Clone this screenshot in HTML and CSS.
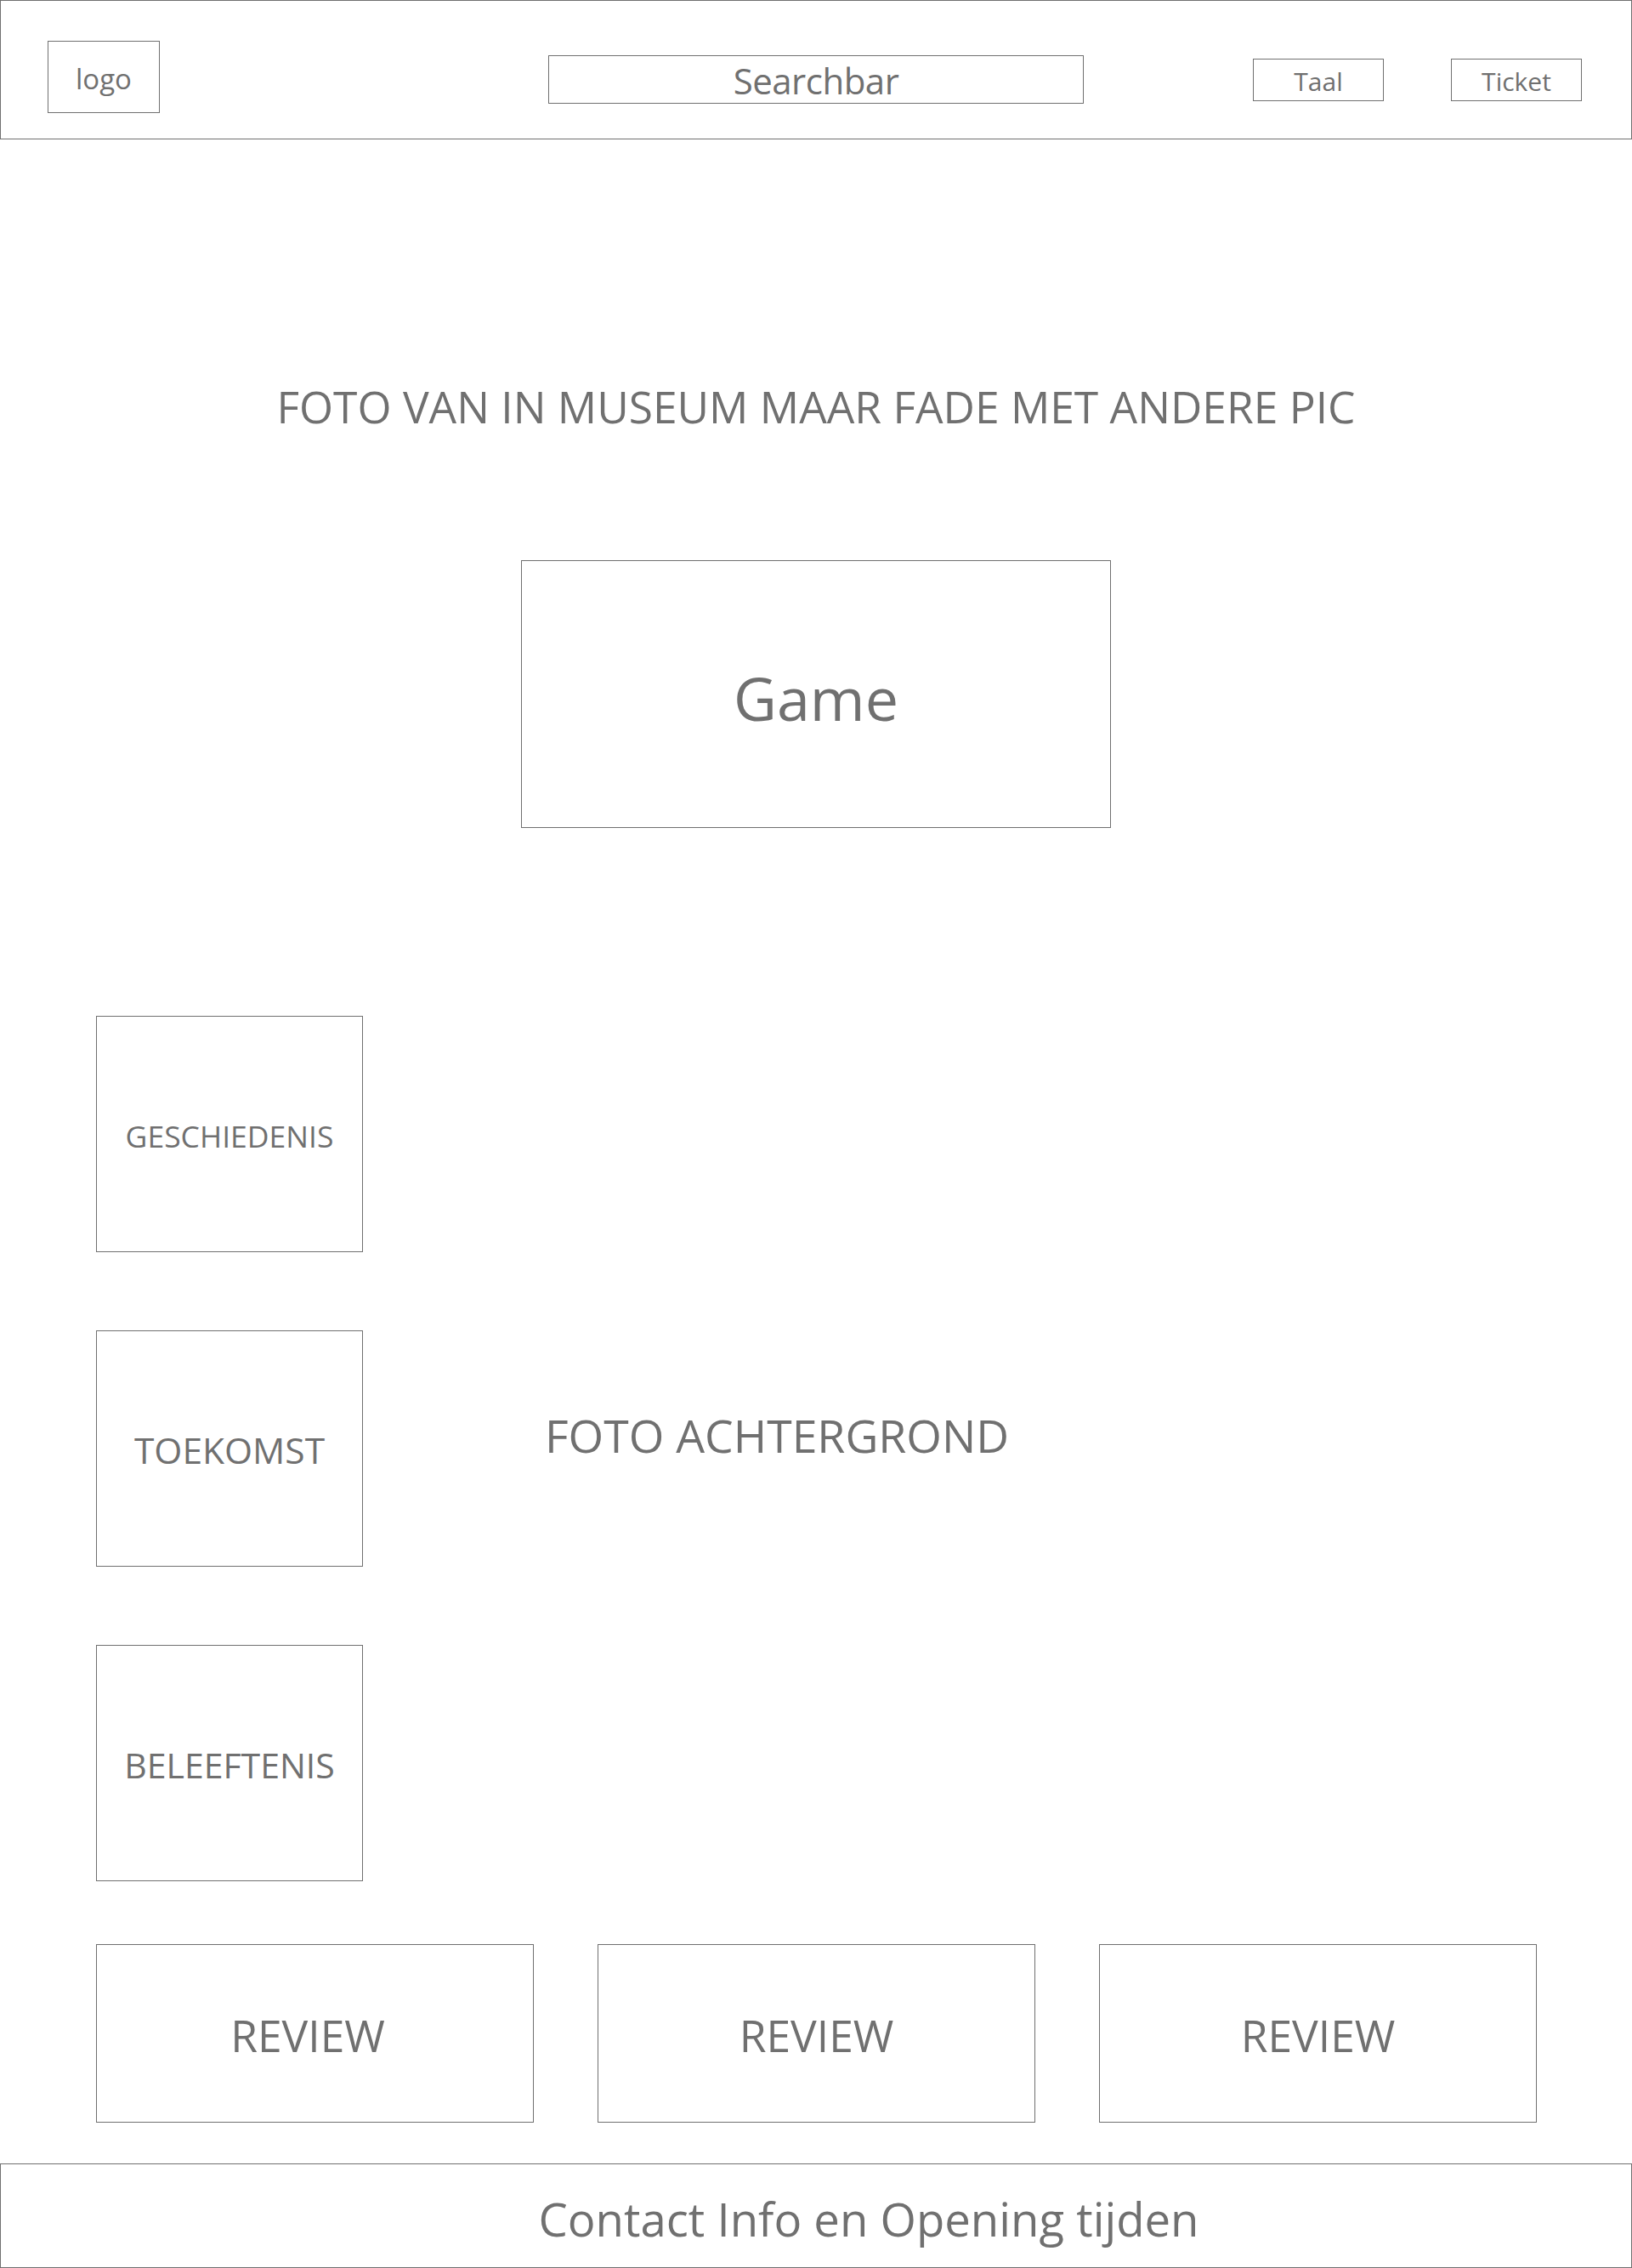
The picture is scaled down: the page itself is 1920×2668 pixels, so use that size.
FILE: index.html
```html
<!DOCTYPE html>
<html lang="nl">
<head>
<meta charset="utf-8">
<title>Museum wireframe</title>
<link rel="stylesheet" href="styles.css">
</head>
<body>
<header class="topbar">
  <div class="box logo">logo</div>
  <div class="box search">Searchbar</div>
  <div class="box pill pill-lang">Taal</div>
  <div class="box pill pill-ticket">Ticket</div>
</header>

<section class="hero">
  <h1 class="hero-title">FOTO VAN IN MUSEUM MAAR FADE MET ANDERE PIC</h1>
  <div class="box game">Game</div>
</section>

<section class="explore">
  <div class="topics">
    <div class="box topic topic-history">GESCHIEDENIS</div>
    <div class="box topic topic-future">TOEKOMST</div>
    <div class="box topic topic-experience">BELEEFTENIS</div>
  </div>
  <div class="backdrop-label">FOTO ACHTERGROND</div>
</section>

<section class="reviews">
  <div class="box review review-first">REVIEW</div>
  <div class="box review">REVIEW</div>
  <div class="box review">REVIEW</div>
</section>

<footer class="footer">Contact Info en Opening tijden</footer>
</body>
</html>
```

FILE: styles.css
```css
html, body {
  margin: 0;
  padding: 0;
  background: #ffffff;
}

body {
  width: 1920px;
  min-height: 2668px;
  font-family: "Open Sans", "Noto Sans", "Liberation Sans", sans-serif;
  font-weight: 400;
  color: #707070;
}

.box {
  box-sizing: border-box;
  border: 1px solid #707070;
  display: flex;
  align-items: center;
  justify-content: center;
  line-height: 1;
  white-space: nowrap;
}

/* Header */
.topbar {
  box-sizing: border-box;
  height: 164px;
  border: 1px solid #707070;
  display: flex;
  align-items: flex-start;
  padding-left: 55px;
}

.logo {
  margin-top: 47px;
  width: 132px;
  height: 85px;
  font-size: 33px;
  padding-top: 4px;
}

.search {
  margin-top: 64px;
  margin-left: 457px;
  width: 630px;
  height: 57px;
  font-size: 42px;
  letter-spacing: -0.5px;
  padding-top: 3px;
}

.pill {
  margin-top: 68px;
  width: 154px;
  height: 50px;
  font-size: 30px;
  padding-top: 3px;
}

.pill-lang {
  margin-left: 199px;
}

.pill-ticket {
  margin-left: 79px;
}

/* Hero */
.hero {
  display: flex;
  flex-direction: column;
  align-items: center;
}

.hero-title {
  margin: 289px 0 0;
  font-size: 51.5px;
  font-weight: 400;
  line-height: 1;
  white-space: nowrap;
}

.game {
  margin-top: 154px;
  width: 694px;
  height: 315px;
  font-size: 70px;
  padding-top: 10px;
}

/* Explore */
.explore {
  display: flex;
  align-items: flex-start;
  margin-top: 221px;
  padding-left: 113px;
}

.topics {
  display: flex;
  flex-direction: column;
  gap: 92px;
}

.topic {
  width: 314px;
  height: 278px;
  padding-top: 6px;
}

.topic-history {
  font-size: 35.5px;
}

.topic-future {
  font-size: 42.5px;
}

.topic-experience {
  font-size: 41px;
}

.backdrop-label {
  margin-left: 214px;
  margin-top: 467px;
  font-size: 53.5px;
  line-height: 1;
  white-space: nowrap;
}

/* Reviews */
.reviews {
  display: flex;
  gap: 75px;
  margin-top: 74px;
  padding-left: 113px;
}

.review {
  width: 515px;
  height: 210px;
  font-size: 51.5px;
  padding-top: 6px;
}

.review-first {
  padding-right: 17px;
}

/* Footer */
.footer {
  box-sizing: border-box;
  margin-top: 48px;
  height: 123px;
  border: 1px solid #707070;
  display: flex;
  align-items: center;
  justify-content: center;
  padding-left: 124px;
  padding-top: 8px;
  font-size: 54.5px;
  line-height: 1;
  white-space: nowrap;
}
```
